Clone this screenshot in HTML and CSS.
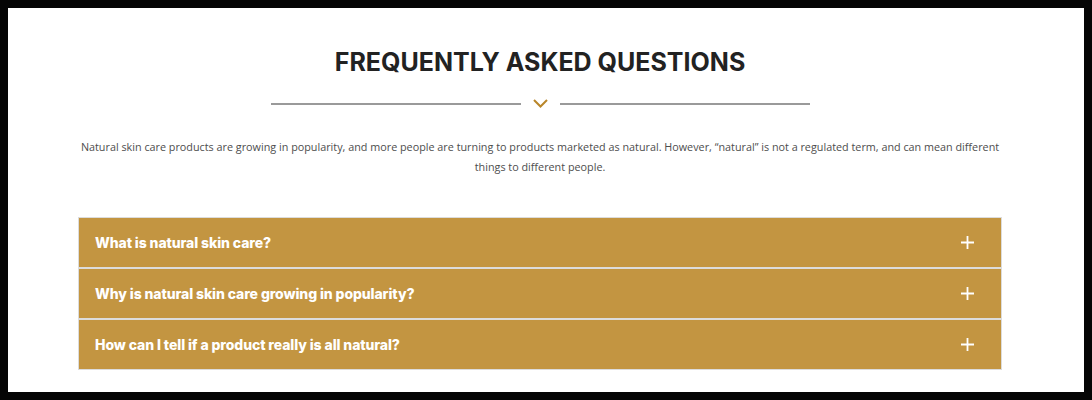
FILE: index.html
```html
<!DOCTYPE html>
<html lang="en">
<head>
    <meta charset="UTF-8">
    <meta name="viewport" content="width=device-width, initial-scale=1.0">
    <title>Frequently Asked Questions</title>
    <link rel="stylesheet" href="styles.css">
</head>
<body>
    <div class="page">
        <section class="faq">
            <h2 class="faq-title">FREQUENTLY ASKED QUESTIONS</h2>
            <div class="divider">
                <span class="divider-line"></span>
                <svg class="divider-icon" width="15" height="9" viewBox="0 0 15 9">
                    <path d="M1 1 L7.5 7.5 L14 1" fill="none" stroke="#b9862a" stroke-width="2"/>
                </svg>
                <span class="divider-line"></span>
            </div>
            <p class="faq-intro">Natural skin care products are growing in popularity, and more people are turning to products marketed as natural. However, “natural” is not a regulated term, and can mean different things to different people.</p>

            <div class="accordion">
                <div class="accordion-item">
                    <span class="accordion-label">What is natural skin care?</span>
                    <svg class="accordion-icon" width="13" height="13" viewBox="0 0 13 13">
                        <path d="M6.5 0 V13 M0 6.5 H13" stroke="#fff" stroke-width="1.8"/>
                    </svg>
                </div>
                <div class="accordion-item">
                    <span class="accordion-label">Why is natural skin care growing in popularity?</span>
                    <svg class="accordion-icon" width="13" height="13" viewBox="0 0 13 13">
                        <path d="M6.5 0 V13 M0 6.5 H13" stroke="#fff" stroke-width="1.8"/>
                    </svg>
                </div>
                <div class="accordion-item">
                    <span class="accordion-label">How can I tell if a product really is all natural?</span>
                    <svg class="accordion-icon" width="13" height="13" viewBox="0 0 13 13">
                        <path d="M6.5 0 V13 M0 6.5 H13" stroke="#fff" stroke-width="1.8"/>
                    </svg>
                </div>
            </div>
        </section>
    </div>
</body>
</html>
```

FILE: styles.css
```css
html {
    background: #050505;
}

body {
    margin: 0;
    padding: 8px;
    font-family: "Open Sans", sans-serif;
}

.page {
    background: #fff;
    height: 384px;
    overflow: hidden;
    padding: 0 82px 0 70px;
}

.faq {
    padding-top: 37px;
}

.faq-title {
    margin: 0;
    text-align: center;
    font-family: Inter, sans-serif;
    font-weight: 700;
    font-size: 25px;
    line-height: 34px;
    color: #222;
}

.divider {
    display: flex;
    align-items: center;
    justify-content: center;
    gap: 12px;
    margin-top: 20px;
}

.divider-line {
    width: 250px;
    height: 2px;
    background: #9a9a9a;
}

.divider-icon {
    display: block;
}

.faq-intro {
    margin: 29px 0 0;
    text-align: center;
    font-size: 10.8px;
    line-height: 20px;
    color: #4d4d4d;
}

.accordion {
    margin-top: 40px;
    display: flex;
    flex-direction: column;
}

.accordion-item {
    display: flex;
    align-items: center;
    justify-content: space-between;
    height: 49px;
    padding: 0 27px 0 16px;
    background: #c39541;
    border: 1px solid #dcdcdc;
}

.accordion-item + .accordion-item {
    border-top-width: 2px;
    margin-top: -1px;
}

.accordion-label {
    font-family: Inter, sans-serif;
    font-weight: 800;
    font-size: 14px;
    letter-spacing: -0.1px;
    color: #fff;
}

.accordion-icon {
    display: block;
}
```
